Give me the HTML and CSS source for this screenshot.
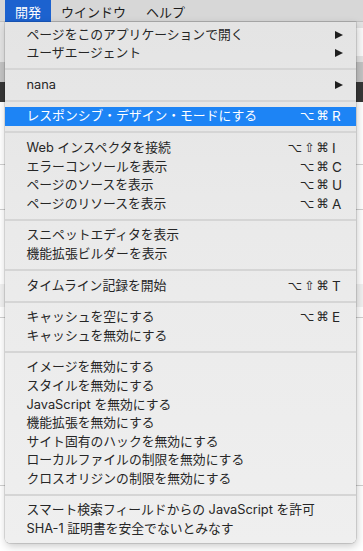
FILE: index.html
```html
<!DOCTYPE html>
<html lang="ja">
<head>
<meta charset="utf-8">
<title>開発メニュー</title>
<link rel="stylesheet" href="styles.css">
</head>
<body>
<div class="screen">
  <div class="menubar">
    <span class="mb-item active">開発</span>
    <span class="mb-item">ウインドウ</span>
    <span class="mb-item">ヘルプ</span>
  </div>
  <div class="page">
    <div class="pg-toolbar"><div class="pg-address"></div></div>
    <div class="pg-tabs"></div>
    <div class="pg-dark"></div>
    <div class="pg-body">
      <div class="pg-rule r1"></div>
      <div class="pg-rule r2"></div>
      <div class="pg-band"></div>
      <div class="pg-rule r3"></div>
      <div class="pg-rule r4"></div>
    </div>
  </div>

  <div class="menu">
    <div class="row"><span class="label">ページをこのアプリケーションで開く</span><span class="arrow"></span></div>
    <div class="row"><span class="label">ユーザエージェント</span><span class="arrow"></span></div>
    <div class="sep"></div>
    <div class="row"><span class="label">nana</span><span class="arrow"></span></div>
    <div class="sep"></div>
    <div class="row selected"><span class="label">レスポンシブ・デザイン・モードにする</span><span class="sc"><span class="mods">⌥ ⌘</span><span class="key">R</span></span></div>
    <div class="sep"></div>
    <div class="row"><span class="label">Web インスペクタを接続</span><span class="sc"><span class="mods">⌥ ⇧ ⌘</span><span class="key">I</span></span></div>
    <div class="row"><span class="label">エラーコンソールを表示</span><span class="sc"><span class="mods">⌥ ⌘</span><span class="key">C</span></span></div>
    <div class="row"><span class="label">ページのソースを表示</span><span class="sc"><span class="mods">⌥ ⌘</span><span class="key">U</span></span></div>
    <div class="row"><span class="label">ページのリソースを表示</span><span class="sc"><span class="mods">⌥ ⌘</span><span class="key">A</span></span></div>
    <div class="sep"></div>
    <div class="row"><span class="label">スニペットエディタを表示</span></div>
    <div class="row"><span class="label">機能拡張ビルダーを表示</span></div>
    <div class="sep"></div>
    <div class="row"><span class="label">タイムライン記録を開始</span><span class="sc"><span class="mods">⌥ ⇧ ⌘</span><span class="key">T</span></span></div>
    <div class="sep"></div>
    <div class="row"><span class="label">キャッシュを空にする</span><span class="sc"><span class="mods">⌥ ⌘</span><span class="key">E</span></span></div>
    <div class="row"><span class="label">キャッシュを無効にする</span></div>
    <div class="sep"></div>
    <div class="row"><span class="label">イメージを無効にする</span></div>
    <div class="row"><span class="label">スタイルを無効にする</span></div>
    <div class="row"><span class="label">JavaScript を無効にする</span></div>
    <div class="row"><span class="label">機能拡張を無効にする</span></div>
    <div class="row"><span class="label">サイト固有のハックを無効にする</span></div>
    <div class="row"><span class="label">ローカルファイルの制限を無効にする</span></div>
    <div class="row"><span class="label">クロスオリジンの制限を無効にする</span></div>
    <div class="sep"></div>
    <div class="row"><span class="label">スマート検索フィールドからの JavaScript を許可</span></div>
    <div class="row"><span class="label">SHA-1 証明書を安全でないとみなす</span></div>
  </div>
</div>
</body>
</html>
```

FILE: styles.css
```css
* { box-sizing: border-box; }

html, body {
  margin: 0;
  padding: 0;
  background: #ffffff;
}

.screen {
  position: relative;
  width: 363px;
  height: 551px;
  overflow: hidden;
  font-family: Inter, "Noto Sans CJK JP", sans-serif;
  color: #262626;
}

/* ---------- menubar ---------- */
.menubar {
  height: 22px;
  display: flex;
  align-items: stretch;
  padding-left: 5px;
  background: #d7d7d7;
  border-bottom: 1px solid #c2c2c2;
  font-size: 13px;
  color: #1c1c1c;
}

.mb-item {
  display: flex;
  align-items: center;
  padding: 0 10px;
  height: 22px;
}

.mb-item.active {
  background: #1c62cf;
  color: #ffffff;
}

/* ---------- page behind the menu ---------- */
.page {
  display: flex;
  flex-direction: column;
}

.pg-toolbar {
  height: 40px;
  background: #e3e3e3;
  display: flex;
  justify-content: flex-end;
  padding: 6px 0;
}

.pg-address {
  width: 60px;
  background: #fafafa;
}

.pg-tabs {
  height: 20px;
  background: #c3c3c3;
}

.pg-dark {
  height: 20px;
  background: #373737;
}

.pg-body {
  display: flex;
  flex-direction: column;
  background: #ffffff;
}

.pg-rule {
  height: 1px;
  background: #cfcfcf;
}

.pg-rule.r1 { margin-top: 62px; }
.pg-rule.r2 { margin-top: 44px; }
.pg-band { margin-top: 74px; height: 23px; background: #f1f1f1; }
.pg-rule.r3 { margin-top: 10px; }
.pg-rule.r4 { margin-top: 167px; }

/* ---------- dropdown menu ---------- */
.menu {
  position: absolute;
  left: 5px;
  top: 22px;
  width: 351px;
  padding: 3.6px 0 4px;
  background: linear-gradient(#e4e4e4, #eaeaea 40%, #efefef);
  border-radius: 0 0 5px 5px;
  box-shadow: 0 0 0 0.5px rgba(0, 0, 0, 0.22), 1px 3px 8px rgba(0, 0, 0, 0.22);
  font-size: 12.8px;
  display: flex;
  flex-direction: column;
}

.row {
  height: 18.6px;
  display: flex;
  align-items: center;
  justify-content: space-between;
  padding: 0 12px 0 21.5px;
  white-space: nowrap;
}

.row.selected {
  background: #1d84f5;
  color: #ffffff;
}

.label {
  line-height: 18.6px;
}

.sep {
  height: 13px;
  display: flex;
  align-items: center;
}

.sep::before {
  content: "";
  display: block;
  width: 100%;
  height: 2px;
  background: #d5d5d5;
}

.arrow {
  width: 0;
  height: 0;
  margin-right: 1px;
  border-left: 8px solid #1e1e1e;
  border-top: 4.5px solid transparent;
  border-bottom: 4.5px solid transparent;
}

.sc {
  display: flex;
  align-items: center;
  line-height: 18.6px;
}

.mods {
  font-family: "DejaVu Sans", sans-serif;
  font-size: 12.5px;
  word-spacing: -2px;
}

.key {
  width: 12px;
  margin-left: 3px;
  font-size: 13.5px;
  font-weight: 400;
}
```
